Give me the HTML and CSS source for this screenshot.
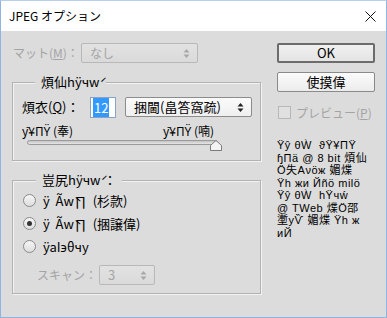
FILE: index.html
```html
<!DOCTYPE html>
<html lang="ja">
<head>
    <meta charset="UTF-8">
    <title>JPEG オプション</title>
    <link rel="stylesheet" href="styles.css">
</head>
<body>
    <div class="dialog">
        <!-- タイトルバー -->
        <div class="titlebar">
            <span class="title">JPEG オプション</span>
            <svg class="close" width="11" height="11" viewBox="0 0 11 11">
                <path d="M0.5 0.5 L10.5 10.5 M10.5 0.5 L0.5 10.5" stroke="#111" stroke-width="1" fill="none"/>
            </svg>
        </div>

        <div class="content">
            <div class="left">
                <!-- マット -->
                <div class="matte-row">
                    <span class="label disabled">マット(<u>M</u>)：</span>
                    <div class="select disabled matte-select">
                        <span>なし</span>
                        <svg class="arrow" width="7" height="9" viewBox="0 0 7 9">
                            <path d="M3.5 0 L6.5 3.5 L0.5 3.5 Z M3.5 9 L6.5 5.5 L0.5 5.5 Z" fill="#a8a8a8"/>
                        </svg>
                    </div>
                </div>

                <!-- 画質オプション -->
                <fieldset class="group quality-group">
                    <legend>煩仙hÿчẃ</legend>
                    <div class="quality-row">
                        <span class="label quality-label">煩衣(<u>Q</u>)：</span>
                        <div class="num-input"><span class="selected">12</span></div>
                        <div class="select quality-select">
                            <span>捆閫(畠答窩疏)</span>
                            <svg class="arrow" width="7" height="9" viewBox="0 0 7 9">
                                <path d="M3.5 0 L6.5 3.5 L0.5 3.5 Z M3.5 9 L6.5 5.5 L0.5 5.5 Z" fill="#222"/>
                            </svg>
                        </div>
                    </div>
                    <div class="slider-labels">
                        <span class="slider-min">ȳ¥ПŸ (奉)</span>
                        <span>ȳ¥ПŸ (喃)</span>
                    </div>
                    <div class="slider">
                        <div class="track"></div>
                        <svg class="thumb" width="12" height="11" viewBox="0 0 12 11">
                            <path d="M0.5 10.5 L0.5 5.5 L6 0.5 L11.5 5.5 L11.5 10.5 Z" fill="#f4f4f4" stroke="#7a7a7a"/>
                        </svg>
                    </div>
                </fieldset>

                <!-- 形式オプション -->
                <fieldset class="group format-group">
                    <legend>豈尻hÿчẃ ：</legend>
                    <div class="radio-row"><span class="radio"></span><span>ÿ&nbsp;&nbsp;Ãẁ∏&nbsp;&nbsp;(杉款)</span></div>
                    <div class="radio-row"><span class="radio checked"></span><span>ÿ&nbsp;&nbsp;Ãẁ∏&nbsp;&nbsp;(捆譲偉)</span></div>
                    <div class="radio-row"><span class="radio"></span><span>ÿaI϶θчy</span></div>
                    <div class="scan-row">
                        <span class="label disabled scan-label">スキャン：</span>
                        <div class="select disabled scan-select">
                            <span>3</span>
                            <svg class="arrow" width="7" height="9" viewBox="0 0 7 9">
                                <path d="M3.5 0 L6.5 3.5 L0.5 3.5 Z M3.5 9 L6.5 5.5 L0.5 5.5 Z" fill="#a8a8a8"/>
                            </svg>
                        </div>
                    </div>
                </fieldset>
            </div>

            <div class="right">
                <button class="btn btn-default">OK</button>
                <button class="btn">使摸偉</button>
                <div class="check-row disabled">
                    <span class="checkbox"></span>
                    <span>プレビュー(<u>P</u>)</span>
                </div>
                <div class="info">
                    <div>Ÿŷ θẀ&nbsp;&nbsp;ϑŸ¥ПŸ</div>
                    <div>ɧПä @ 8 bit 煩仙</div>
                    <div>Ö失Аνöж 媚煠</div>
                    <div>Ÿh жи Йñö milö</div>
                    <div>Ÿŷ θẀ&nbsp;&nbsp;hŸчẃ</div>
                    <div>@ TWeb 煠Ö邵</div>
                    <div>壍уѶ 媚煠 Ÿh ж</div>
                    <div>иЙ</div>
                </div>
            </div>
        </div>
    </div>
</body>
</html>
```

FILE: styles.css
```css
* {
    margin: 0;
    padding: 0;
    box-sizing: border-box;
}

body {
    width: 387px;
    height: 318px;
    overflow: hidden;
    background: #dcdcdc;
    color: #000;
    font-family: "Noto Sans CJK JP", "Noto Sans", sans-serif;
    font-size: 12px;
}

.dialog {
    width: 387px;
    height: 318px;
    border: 1px solid #8fb4df;
    border-top-color: #b8d0ec;
    background: #dcdcdc;
    display: flex;
    flex-direction: column;
}

/* タイトルバー */
.titlebar {
    height: 30px;
    flex-shrink: 0;
    background: #fff;
    display: flex;
    align-items: center;
    justify-content: space-between;
    padding: 0 10px 0 8px;
}

.title {
    font-size: 12px;
    line-height: 16px;
}

.content {
    display: flex;
    gap: 16px;
    padding: 12px 0 0 11px;
}

.left {
    width: 249px;
    flex-shrink: 0;
    display: flex;
    flex-direction: column;
}

.label {
    line-height: 16px;
    white-space: nowrap;
}

.disabled {
    color: #a4a4a4;
}

/* セレクト */
.select {
    height: 20px;
    border: 1px solid #8c8c8c;
    border-radius: 2px;
    background: linear-gradient(#fbfbfb, #efefef);
    display: flex;
    align-items: center;
    justify-content: space-between;
    padding: 0 7px 0 8px;
    line-height: 16px;
    white-space: nowrap;
}

.select.disabled {
    border-color: #b8b8b8;
    background: linear-gradient(#e2e2e2, #dadada);
}

.matte-row {
    height: 20px;
    display: flex;
    align-items: center;
    padding-left: 1px;
}

.matte-row .label {
    width: 68px;
}

.matte-select {
    width: 117px;
}

/* グループ */
.group {
    border: 1px solid #b2b2b2;
    box-shadow: 1px 1px 0 #f2f2f2, inset 1px 1px 0 #f2f2f2;
    padding: 0;
    min-width: 0;
}

.group legend {
    margin-left: 13px;
    padding: 0 6px;
    font-size: 13px;
    line-height: 16px;
    background: #dcdcdc;
}

.quality-group {
    margin-top: 11px;
    padding: 6px 0 9px 9px;
}

.quality-row {
    height: 22px;
    display: flex;
    align-items: center;
}

.quality-label {
    width: 68px;
    font-size: 13px;
}

.num-input {
    width: 26px;
    height: 21px;
    border: 1px solid #8aa3c4;
    background: #fff;
    padding: 2px 0 0 2px;
    line-height: 15px;
    font-size: 13px;
}

.selected {
    background: #3399ff;
    color: #fff;
    padding: 0 1px;
}

.quality-select {
    width: 127px;
    margin-left: 9px;
    font-size: 13px;
}

.slider-labels {
    margin-top: 6px;
    height: 14px;
    line-height: 14px;
    display: flex;
    white-space: nowrap;
}

.slider-min {
    width: 141px;
}

.slider {
    position: relative;
    height: 11px;
    margin: 1px 0 0 5px;
    width: 194px;
}

.track {
    margin-top: 2px;
    width: 191px;
    height: 5px;
    border: 1px solid #9a9a9a;
    border-radius: 3px;
    background: linear-gradient(#c4c4c4, #e6e6e6);
}

.thumb {
    position: absolute;
    left: 183px;
    top: 0;
}

/* 形式 */
.format-group {
    margin-top: 11px;
    padding: 1px 0 8px 10px;
}

.radio-row {
    height: 23px;
    display: flex;
    align-items: center;
    gap: 7px;
    font-size: 13px;
    white-space: nowrap;
}

.radio {
    width: 13px;
    height: 13px;
    flex-shrink: 0;
    border: 1px solid #8a8a8a;
    border-radius: 50%;
    background: linear-gradient(#f6f6f6, #dedede);
    display: flex;
    align-items: center;
    justify-content: center;
}

.radio.checked::after {
    content: "";
    width: 5px;
    height: 5px;
    border-radius: 50%;
    background: #333;
}

.scan-row {
    margin-top: 7px;
    height: 20px;
    display: flex;
    align-items: center;
    padding-left: 14px;
}

.scan-label {
    width: 62px;
}

.scan-select {
    width: 56px;
    font-size: 13px;
}

/* 右側 */
.right {
    width: 98px;
    flex-shrink: 0;
    display: flex;
    flex-direction: column;
}

.btn {
    height: 20px;
    border: 1px solid #8a8a8a;
    border-radius: 2px;
    background: linear-gradient(#fbfbfb, #ececec);
    font-family: inherit;
    font-size: 13px;
    line-height: 16px;
    color: #000;
}

.btn-default {
    border: 2px solid #6c6c6c;
    background: linear-gradient(#f0f0f0, #e4e4e4);
}

.btn + .btn {
    margin-top: 9px;
}

.check-row {
    margin-top: 13px;
    height: 14px;
    display: flex;
    align-items: center;
    gap: 5px;
    padding-left: 1px;
    font-size: 12px;
    white-space: nowrap;
}

.checkbox {
    width: 13px;
    height: 13px;
    flex-shrink: 0;
    border: 1px solid #b8b8b8;
    background: #e0e0e0;
}

.info {
    margin-top: 20px;
    font-family: "Liberation Sans", "Noto Sans CJK JP", sans-serif;
    font-size: 11px;
    line-height: 12.5px;
    letter-spacing: 0.5px;
    white-space: nowrap;
}
```
